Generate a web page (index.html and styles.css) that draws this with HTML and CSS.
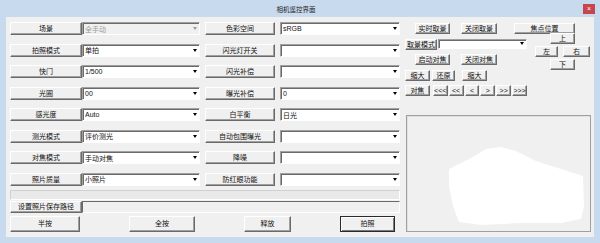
FILE: index.html
```html
<!DOCTYPE html>
<html lang="zh">
<head>
    <meta charset="UTF-8">
    <title>相机遥控界面</title>
    <link rel="stylesheet" href="styles.css">
</head>
<body>
    <div class="window">
        <div class="titlebar">
            <span class="title">相机遥控界面</span>
            <span class="close">×</span>
        </div>
        <div class="client">
            <div class="left-panel">
                <div class="settings">
                    <div class="row">
                        <button class="btn lbl">场景</button>
                        <div class="combo disabled"><span class="val">全手动</span><i class="arrow"></i></div>
                        <button class="btn lbl lbl-b">色彩空间</button>
                        <div class="combo combo-b"><span class="val">sRGB</span><i class="arrow"></i></div>
                    </div>
                    <div class="row">
                        <button class="btn lbl">拍照模式</button>
                        <div class="combo"><span class="val">单拍</span><i class="arrow"></i></div>
                        <button class="btn lbl lbl-b">闪光灯开关</button>
                        <div class="combo combo-b"><span class="val"></span><i class="arrow"></i></div>
                    </div>
                    <div class="row">
                        <button class="btn lbl">快门</button>
                        <div class="combo"><span class="val">1/500</span><i class="arrow"></i></div>
                        <button class="btn lbl lbl-b">闪光补偿</button>
                        <div class="combo combo-b"><span class="val"></span><i class="arrow"></i></div>
                    </div>
                    <div class="row">
                        <button class="btn lbl">光圈</button>
                        <div class="combo"><span class="val">00</span><i class="arrow"></i></div>
                        <button class="btn lbl lbl-b">曝光补偿</button>
                        <div class="combo combo-b"><span class="val">0</span><i class="arrow"></i></div>
                    </div>
                    <div class="row">
                        <button class="btn lbl">感光度</button>
                        <div class="combo"><span class="val">Auto</span><i class="arrow"></i></div>
                        <button class="btn lbl lbl-b">白平衡</button>
                        <div class="combo combo-b"><span class="val">日光</span><i class="arrow"></i></div>
                    </div>
                    <div class="row">
                        <button class="btn lbl">测光模式</button>
                        <div class="combo"><span class="val">评价测光</span><i class="arrow"></i></div>
                        <button class="btn lbl lbl-b">自动包围曝光</button>
                        <div class="combo combo-b"><span class="val"></span><i class="arrow"></i></div>
                    </div>
                    <div class="row">
                        <button class="btn lbl">对焦模式</button>
                        <div class="combo"><span class="val">手动对焦</span><i class="arrow"></i></div>
                        <button class="btn lbl lbl-b">降噪</button>
                        <div class="combo combo-b"><span class="val"></span><i class="arrow"></i></div>
                    </div>
                    <div class="row">
                        <button class="btn lbl">照片质量</button>
                        <div class="combo"><span class="val">小照片</span><i class="arrow"></i></div>
                        <button class="btn lbl lbl-b">防红眼功能</button>
                        <div class="combo combo-b"><span class="val"></span><i class="arrow"></i></div>
                    </div>
                </div>
                <div class="status-box"></div>
                <div class="path-row">
                    <button class="btn lbl">设置照片保存路径</button>
                    <div class="path-field"></div>
                </div>
                <div class="action-row">
                    <button class="btn act act-half">半按</button>
                    <button class="btn act act-full">全按</button>
                    <button class="btn act act-release">释放</button>
                    <button class="btn act act-shoot default">拍照</button>
                </div>
            </div>

            <div class="right-panel">
                <div class="live-row">
                    <button class="btn sm w35">实时取景</button>
                    <button class="btn sm w36 ml11">关闭取景</button>
                    <button class="btn sm focus-pos">焦点位置</button>
                </div>
                <div class="cam-area">
                    <div class="cam-ctrl">
                        <div class="ctrl-row">
                            <button class="btn sm w32">取景模式</button>
                            <div class="combo lv-combo"><span class="val"></span><i class="arrow"></i></div>
                        </div>
                        <div class="ctrl-row live-row-b">
                            <button class="btn sm w35">启动对焦</button>
                            <button class="btn sm w36 ml11">关闭对焦</button>
                        </div>
                        <div class="ctrl-row">
                            <button class="btn sm w25">缩大</button>
                            <button class="btn sm w23 ml2">还原</button>
                            <button class="btn sm w25 ml7">缩大</button>
                        </div>
                        <div class="ctrl-row step-row">
                            <button class="btn sm w25">对焦</button>
                            <button class="btn sm step ml2">&lt;&lt;&lt;</button>
                            <button class="btn sm step">&lt;&lt;</button>
                            <button class="btn sm step">&lt;</button>
                            <button class="btn sm step">&gt;</button>
                            <button class="btn sm step">&gt;&gt;</button>
                            <button class="btn sm step">&gt;&gt;&gt;</button>
                        </div>
                    </div>
                    <div class="dpad">
                        <button class="btn sm up">上</button>
                        <button class="btn sm left">左</button>
                        <button class="btn sm right">右</button>
                        <button class="btn sm down">下</button>
                    </div>
                </div>
                <div class="preview">
                    <svg viewBox="0 0 183 115" preserveAspectRatio="none">
                        <polygon fill="#fff" points="42,53 64,42 79,33 94,31 109,35 129,45 154,53 176,60 177,90 174,103 154,107 114,107 74,109 52,106 46,90 42,70"/>
                    </svg>
                </div>
            </div>
        </div>
    </div>
</body>
</html>
```

FILE: styles.css
```css
* {
    margin: 0;
    padding: 0;
    box-sizing: border-box;
}

body {
    font-family: "Liberation Sans", "Noto Sans CJK SC", sans-serif;
    font-size: 7px;
    color: #111;
    background: #c8daee;
}

.window {
    width: 600px;
    height: 243px;
    background: #c8daee;
}

.titlebar {
    height: 17px;
    display: grid;
    grid-template-columns: 1fr auto 1fr;
    align-items: center;
}

.title {
    grid-column: 2;
    font-family: "Noto Sans CJK SC", sans-serif;
    font-size: 6.5px;
    color: #222;
    margin-right: 8px;
}

.close {
    grid-column: 3;
    justify-self: end;
    width: 12px;
    height: 10px;
    margin-right: 5px;
    background: #c9454e;
    color: #fff;
    font-size: 7px;
    line-height: 10px;
    text-align: center;
}

.client {
    margin: 0 6px;
    height: 220px;
    background: #f0f0f0;
    display: flex;
}

/* 按钮 */
.btn {
    font-family: "Liberation Sans", "Noto Sans CJK SC", sans-serif;
    font-size: 7px;
    color: #111;
    background: #f0f0f0;
    border: 1px solid;
    border-color: #fff #6a6a6a #6a6a6a #fff;
    box-shadow: inset -1px -1px #a0a0a0;
    display: flex;
    align-items: center;
    justify-content: center;
    white-space: nowrap;
    line-height: 1;
}

.btn.default {
    border-color: #2a2a2a;
    box-shadow: inset 1px 1px #fff, inset -1px -1px #7a7a7a;
}

/* 下拉框 */
.combo {
    display: flex;
    align-items: center;
    background: #fff;
    border: 1px solid;
    border-color: #a0a0a0 #fff #fff #a0a0a0;
    box-shadow: inset 1px 1px #6a6a6a;
    padding-left: 2px;
}

.combo .val {
    flex: 1;
    white-space: nowrap;
    overflow: hidden;
}

.combo .arrow {
    width: 6px;
    height: 100%;
    margin-right: 1px;
    display: flex;
    align-items: center;
    justify-content: center;
}

.combo .arrow::after {
    content: "";
    border-left: 2.5px solid transparent;
    border-right: 2.5px solid transparent;
    border-top: 3px solid #000;
}

.combo.disabled {
    background: #f0f0f0;
    color: #9a9a9a;
}

.combo.disabled .arrow::after {
    border-top-color: #9a9a9a;
}

/* 左侧 */
.left-panel {
    width: 390px;
    margin-left: 4px;
    padding-top: 5px;
    display: flex;
    flex-direction: column;
}

.settings {
    display: grid;
    grid-auto-rows: 13px;
    row-gap: 8.5px;
}

.row {
    display: flex;
}

.lbl {
    width: 72px;
}

.row .combo {
    width: 118px;
}

.row .lbl-b {
    width: 70px;
    margin-left: 5px;
}

.row .combo-b {
    width: 120px;
    margin-left: 5px;
}

.status-box {
    margin-top: 4px;
    height: 10px;
    background: #e9e9e9;
    border: 1px solid;
    border-color: #d0d0d0 #fff #fff #d0d0d0;
}

.path-row {
    margin-top: 1px;
    height: 12px;
    display: flex;
}

.path-field {
    flex: 1;
    border: 1px solid;
    border-color: #6a6a6a #fff #fff #6a6a6a;
    background: #f0f0f0;
}

.action-row {
    margin-top: 3px;
    height: 16px;
    padding-right: 5px;
    display: flex;
    justify-content: space-between;
}

.act-half { width: 70px; }
.act-full { width: 66px; }
.act-release { width: 47px; }
.act-shoot { width: 55px; }

/* 右侧 */
.right-panel {
    width: 186px;
    margin-left: 5px;
    padding-top: 6px;
    display: flex;
    flex-direction: column;
}

.sm {
    height: 11px;
}

.live-row {
    display: flex;
    padding-left: 10px;
}

.focus-pos {
    width: 61px;
    margin-left: 17px;
}

.w23 { width: 23px; }
.w25 { width: 25px; }
.w32 { width: 32px; }
.w35 { width: 35px; }
.w36 { width: 36px; }
.ml2 { margin-left: 2px; }
.ml7 { margin-left: 7px; }
.ml11 { margin-left: 11px; }

.cam-area {
    display: flex;
}

.cam-ctrl {
    width: 122px;
    display: flex;
    flex-direction: column;
    gap: 4.5px;
    padding-top: 4.5px;
}

.ctrl-row {
    display: flex;
    height: 11px;
}

.live-row-b {
    padding-left: 10px;
}

.lv-combo {
    width: 89px;
    height: 10px;
    margin-left: 1px;
}

.step-row {
    gap: 1px;
}

.step {
    width: 15px;
}

.dpad {
    margin-left: 8px;
    margin-top: -1px;
    display: grid;
    grid-template-columns: 15px 8px 5px 12px 15px;
    grid-template-rows: 11px 11px 11px;
    row-gap: 2px;
    align-self: flex-start;
}

.dpad .up { grid-column: 2 / 5; grid-row: 1; }
.dpad .left { grid-column: 1 / 3; grid-row: 2; }
.dpad .right { grid-column: 4 / 6; grid-row: 2; }
.dpad .down { grid-column: 2 / 5; grid-row: 3; }

.preview {
    margin-top: 19px;
    margin-left: 1px;
    width: 185px;
    height: 117px;
    border: 1px solid;
    border-color: #a0a0a0 #a0a0a0 #a0a0a0 #a0a0a0;
    box-shadow: inset 1px 1px #e0e0e0;
    background: #f0f0f0;
}

.preview svg {
    display: block;
    width: 100%;
    height: 100%;
}
```
